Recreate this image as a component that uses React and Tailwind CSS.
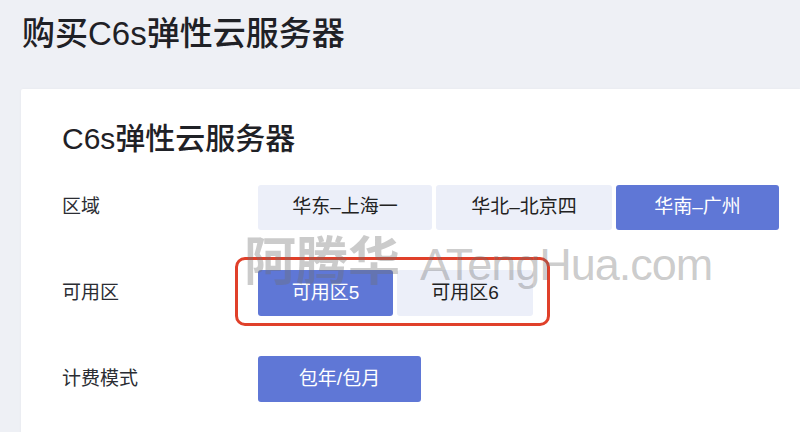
import React from "react";

const font = { fontFamily: '"Liberation Sans", "Noto Sans CJK SC", sans-serif' };

function Btn({ children, active, w }) {
  return (
    <div
      className={`flex h-[45px] items-center justify-center rounded-[3px] text-[19px] ${w} ${
        active ? "bg-[#5f77d6] text-white" : "bg-[#eceff9] text-[#222]"
      }`}
    >
      {children}
    </div>
  );
}

export default function App() {
  return (
    <div
      className="relative h-[432px] w-[800px] overflow-hidden bg-[#eef0f5]"
      style={font}
    >
      <h1 className="pl-[22px] pt-[14px] text-[33px] font-medium leading-[40px] text-[#1f2126]">
        购买C6s弹性云服务器
      </h1>
      <div className="ml-[21px] mt-[35px] h-[400px] rounded-tl-[2px] bg-white pl-[41px] pt-[32px] shadow-[0_0_3px_rgba(0,0,0,0.04)]">
        <h2 className="text-[30px] font-medium leading-[36px] text-[#1f2126]">
          C6s弹性云服务器
        </h2>
        <div className="mt-[28px] flex flex-col gap-[40px]">
          <div className="flex items-center">
            <div className="w-[196px] text-[19px] text-[#2b2d33]">区域</div>
            <div className="flex gap-[4px]">
              <Btn w="w-[174px]">华东–上海一</Btn>
              <Btn w="w-[176px]">华北–北京四</Btn>
              <Btn w="w-[163px]" active>
                华南–广州
              </Btn>
            </div>
          </div>
          <div className="flex items-center">
            <div className="w-[196px] text-[19px] text-[#2b2d33]">可用区</div>
            <div className="relative flex gap-[4px]">
              <Btn w="w-[135px] h-[46px]" active>
                可用区5
              </Btn>
              <Btn w="w-[136px] h-[46px]">可用区6</Btn>
              <div className="pointer-events-none absolute left-[-23px] top-[-13px] h-[69px] w-[315px] rounded-[10px] border-[3px] border-[#e0402a]" />
            </div>
          </div>
          <div className="flex items-center">
            <div className="w-[196px] text-[19px] text-[#2b2d33]">计费模式</div>
            <Btn w="w-[163px] h-[46px]" active>
              包年/包月
            </Btn>
          </div>
        </div>
      </div>
      <div className="pointer-events-none absolute left-[244px] top-[232px] flex items-baseline whitespace-nowrap text-[rgba(110,110,110,0.36)]">
        <span className="text-[52px] font-bold leading-[60px]">阿腾华</span>
        <span className="ml-[20px] text-[45px] font-light leading-[60px] tracking-[-1px]">
          ATengHua.com
        </span>
      </div>
    </div>
  );
}
